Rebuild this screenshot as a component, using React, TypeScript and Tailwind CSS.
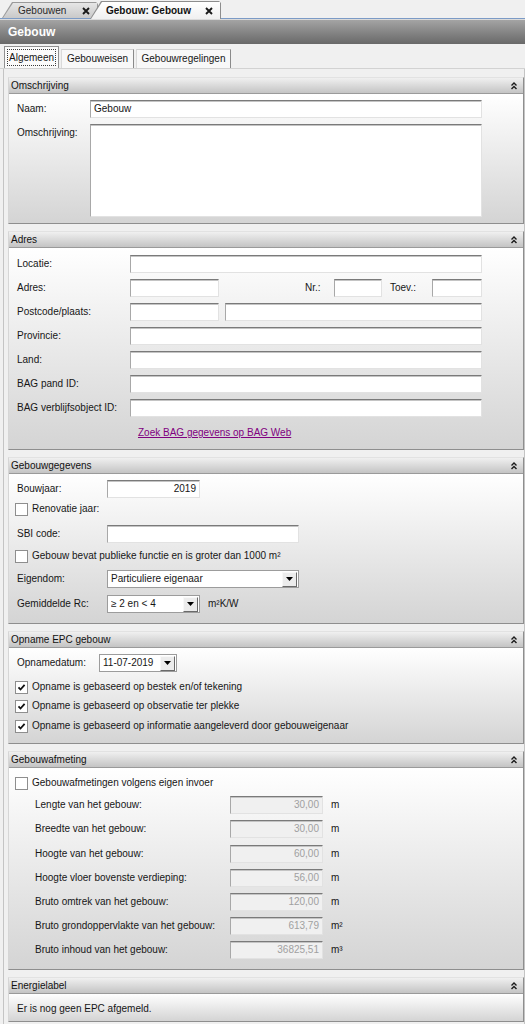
import React from "react";

type Kids = { children?: React.ReactNode; className?: string };

function Chevrons() {
  return (
    <svg width="8" height="9" viewBox="0 0 8 9" className="shrink-0">
      <path d="M1.5 4.5L4 2L6.5 4.5" fill="none" stroke="#1a1a1a" strokeWidth="1.4" />
      <path d="M1.5 8L4 5.5L6.5 8" fill="none" stroke="#1a1a1a" strokeWidth="1.4" />
    </svg>
  );
}

function CloseX() {
  return (
    <svg width="8" height="8" viewBox="0 0 8 8" className="shrink-0">
      <path d="M1 1L7 7M7 1L1 7" stroke="#1a1a1a" strokeWidth="1.9" />
    </svg>
  );
}

function Section({ title, children, className = "" }: Kids & { title: string }) {
  return (
    <div className="mt-[7px] border border-t-[#e2e2e2] border-l-[#d6d6d6] border-r-[#8e8e8e] border-b-[#8e8e8e]">
      <div className="flex h-[16px] items-center justify-between border-b border-[#9a9a9a] bg-linear-to-b from-[#f0f0f0] to-[#c4c4c4] pl-[2px] pr-[5px] text-[#111]">
        <span>{title}</span>
        <Chevrons />
      </div>
      <div className={`bg-linear-to-b from-white to-[#d4d4d4] ${className}`}>{children}</div>
    </div>
  );
}

function Field({ children, className = "", disabled = false }: Kids & { disabled?: boolean }) {
  return (
    <div
      className={`flex h-[18px] shrink-0 items-center border border-t-[#7a7a7a] border-l-[#a8a8a8] border-r-[#e2e2e2] border-b-[#e2e2e2] px-[3px] shadow-[inset_0_1px_0_#c4c4c4] ${
        disabled ? "justify-end bg-[#f0f0f0] text-[#a0a0a0]" : "bg-white"
      } ${className}`}
    >
      {children}
    </div>
  );
}

function Check({ checked = false }: { checked?: boolean }) {
  return (
    <div className="flex h-[13px] w-[13px] shrink-0 items-center justify-center border border-[#8e8e8e] bg-white">
      {checked && (
        <svg width="9" height="9" viewBox="0 0 9 9">
          <path d="M1.5 4.3L3.5 6.5L7.6 1.8" fill="none" stroke="#111" strokeWidth="1.8" />
        </svg>
      )}
    </div>
  );
}

function Select({ value, className = "" }: { value: string; className?: string }) {
  return (
    <div className={`flex h-[18px] shrink-0 items-center border border-[#9c9c9c] bg-white pl-[3px] ${className}`}>
      <span className="flex-1 truncate">{value}</span>
      <div className="mr-px flex h-[15px] w-[15px] items-center justify-center border border-t-[#f8f8f8] border-l-[#f8f8f8] border-r-[#6a6a6a] border-b-[#6a6a6a] bg-[#ececec]">
        <svg width="7" height="4" viewBox="0 0 7 4">
          <path d="M0 0H7L3.5 4Z" fill="#000" />
        </svg>
      </div>
    </div>
  );
}

function CheckRow({ label, checked = false, className = "" }: { label: string; checked?: boolean; className?: string }) {
  return (
    <div className={`flex h-[18px] items-center pl-[6px] ${className}`}>
      <Check checked={checked} />
      <span className="ml-[4px]">{label}</span>
    </div>
  );
}

const afmetingen = [
  { label: "Lengte van het gebouw:", value: "30,00", unit: "m", mt: "mt-[4px]" },
  { label: "Breedte van het gebouw:", value: "30,00", unit: "m", mt: "mt-[6px]" },
  { label: "Hoogte van het gebouw:", value: "60,00", unit: "m", mt: "mt-[7px]" },
  { label: "Hoogte vloer bovenste verdieping:", value: "56,00", unit: "m", mt: "mt-[6px]" },
  { label: "Bruto omtrek van het gebouw:", value: "120,00", unit: "m", mt: "mt-[6px]" },
  { label: "Bruto grondoppervlakte van het gebouw:", value: "613,79", unit: "m²", mt: "mt-[6px]" },
  { label: "Bruto inhoud van het gebouw:", value: "36825,51", unit: "m³", mt: "mt-[6px]" },
];

const adresRows = ["Provincie:", "Land:", "BAG pand ID:", "BAG verblijfsobject ID:"];

export default function App() {
  return (
    <div className="h-[1024px] w-[525px] overflow-hidden bg-[#f0f0f0] font-['Liberation_Sans',Arial,sans-serif] text-[10px] leading-none text-[#161616]">
      {/* document tabs */}
      <div className="flex h-[19px] items-end border-b border-[#7c9bc6] pl-[2px]">
        <div className="h-[16px] w-[96px] bg-[#9a9a9a] px-px pt-px [clip-path:polygon(10px_0,calc(100%-2px)_0,100%_2px,100%_100%,0_100%)]">
          <div className="flex h-full items-center bg-linear-to-b from-[#e6e6e6] to-[#c9c9c9] pl-[15px] pr-[7px] text-[#2a2a2a] [clip-path:polygon(10px_0,100%_0,100%_100%,0_100%)]">
            <span>Gebouwen</span>
            <span className="ml-auto">
              <CloseX />
            </span>
          </div>
        </div>
        <div className="relative z-10 -mb-px -ml-[8px] h-[18px] w-[131px] bg-[#8d8d8d] px-px pt-px [clip-path:polygon(11px_0,calc(100%-2px)_0,100%_2px,100%_100%,0_100%)]">
          <div className="flex h-full items-center bg-linear-to-b from-white to-[#f0f0f0] pl-[15px] pr-[7px] font-bold text-[#111] [clip-path:polygon(11px_0,100%_0,100%_100%,0_100%)]">
            <span>Gebouw: Gebouw</span>
            <span className="ml-auto">
              <CloseX />
            </span>
          </div>
        </div>
      </div>

      {/* title bar */}
      <div className="flex h-[25px] items-center border-t border-[#dadada] bg-linear-to-b from-[#a4a4a4] to-[#696969] pl-[8px] text-[12px] font-bold text-white">
        Gebouw
      </div>

      {/* page tabs */}
      <div className="flex h-[25px] items-end border-b border-[#d2d2d2] pl-[4px]">
        <div className="h-[22px] w-[55px] border border-b-0 border-[#919191] bg-[#fbfbfb] p-[2px]">
          <div className="flex h-full items-center justify-center border border-dotted border-[#3a3a3a]">Algemeen</div>
        </div>
        <div className="ml-[2px] flex h-[19px] w-[73px] items-center justify-center border border-b-0 border-t-[#cfcfcf] border-l-[#dadada] border-r-[#8a8a8a] bg-[#f8f8f8]">
          Gebouweisen
        </div>
        <div className="ml-[2px] flex h-[19px] w-[95px] items-center justify-center border border-b-0 border-t-[#cfcfcf] border-l-[#dadada] border-r-[#8a8a8a] bg-[#f8f8f8]">
          Gebouwregelingen
        </div>
      </div>

      {/* panel */}
      <div className="ml-[3px] h-full w-[522px] border-l border-r border-[#c4c4c4] pl-[4px] pt-px">
        <Section title="Omschrijving" className="pb-[6px] pt-[6px]">
          <div className="flex h-[18px] items-center pl-[8px]">
            <span className="w-[73px]">Naam:</span>
            <Field className="w-[392px]">Gebouw</Field>
          </div>
          <div className="mt-[6px] flex pl-[8px]">
            <span className="w-[73px] pt-[4px]">Omschrijving:</span>
            <Field className="h-[93px] w-[392px]" />
          </div>
        </Section>

        <Section title="Adres" className="pb-[10px] pt-[7px]">
          <div className="flex flex-col gap-[6px] pl-[8px]">
            <div className="flex h-[18px] items-center">
              <span className="w-[113px]">Locatie:</span>
              <Field className="w-[352px]" />
            </div>
            <div className="flex h-[18px] items-center">
              <span className="w-[113px]">Adres:</span>
              <Field className="w-[89px]" />
              <span className="ml-[86px] w-[29px]">Nr.:</span>
              <Field className="w-[48px]" />
              <span className="ml-[8px] w-[42px]">Toev.:</span>
              <Field className="w-[50px]" />
            </div>
            <div className="flex h-[18px] items-center">
              <span className="w-[113px]">Postcode/plaats:</span>
              <Field className="w-[89px]" />
              <Field className="ml-[6px] w-[257px]" />
            </div>
            {adresRows.map((label) => (
              <div key={label} className="flex h-[18px] items-center">
                <span className="w-[113px]">{label}</span>
                <Field className="w-[352px]" />
              </div>
            ))}
          </div>
          <div className="mt-[10px] flex h-[12px] items-center pl-[129px]">
            <span className="text-[#800080] underline">Zoek BAG gegevens op BAG Web</span>
          </div>
        </Section>

        <Section title="Gebouwgegevens" className="pb-[10px] pt-[6px]">
          <div className="flex h-[18px] items-center pl-[8px]">
            <span className="w-[90px]">Bouwjaar:</span>
            <Field className="w-[93px] justify-end">2019</Field>
          </div>
          <CheckRow label="Renovatie jaar:" className="mt-[2px]" />
          <div className="mt-[7px] flex h-[18px] items-center pl-[8px]">
            <span className="w-[90px]">SBI code:</span>
            <Field className="w-[192px]" />
          </div>
          <CheckRow label="Gebouw bevat publieke functie en is groter dan 1000 m²" className="mt-[4px]" />
          <div className="mt-[5px] flex h-[18px] items-center pl-[8px]">
            <span className="w-[90px]">Eigendom:</span>
            <Select value="Particuliere eigenaar" className="w-[192px]" />
          </div>
          <div className="mt-[7px] flex h-[18px] items-center pl-[8px]">
            <span className="w-[90px]">Gemiddelde Rc:</span>
            <Select value="≥ 2 en < 4" className="w-[93px]" />
            <span className="ml-[8px]">m²K/W</span>
          </div>
        </Section>

        <Section title="Opname EPC gebouw" className="pb-[8px] pt-[6px]">
          <div className="flex h-[18px] items-center pl-[8px]">
            <span className="w-[82px]">Opnamedatum:</span>
            <Select value="11-07-2019" className="w-[78px]" />
          </div>
          <CheckRow checked label="Opname is gebaseerd op bestek en/of tekening" className="mt-[6px]" />
          <CheckRow checked label="Opname is gebaseerd op observatie ter plekke" className="mt-px" />
          <CheckRow checked label="Opname is gebaseerd op informatie aangeleverd door gebouweigenaar" className="mt-[2px]" />
        </Section>

        <Section title="Gebouwafmeting" className="pb-[10px] pt-[6px]">
          <CheckRow label="Gebouwafmetingen volgens eigen invoer" />
          {afmetingen.map((row) => (
            <div key={row.label} className={`flex h-[18px] items-center pl-[26px] ${row.mt}`}>
              <span className="w-[195px]">{row.label}</span>
              <Field disabled className="w-[93px]">
                {row.value}
              </Field>
              <span className="ml-[8px]">{row.unit}</span>
            </div>
          ))}
        </Section>

        <Section title="Energielabel" className="h-[27px] pl-[8px] pt-[10px]">
          <span>Er is nog geen EPC afgemeld.</span>
        </Section>
      </div>
    </div>
  );
}
